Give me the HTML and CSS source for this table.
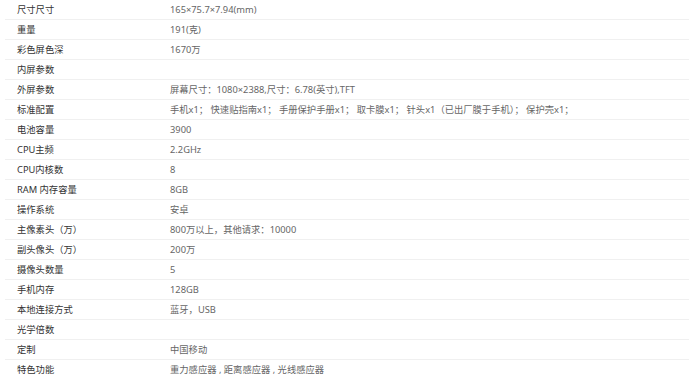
FILE: index.html
```html
<!DOCTYPE html>
<html lang="zh">
<head>
<meta charset="utf-8">
<link rel="stylesheet" href="styles.css">
</head>
<body>
<table class="spec">
<tbody>
<tr><td class="k">尺寸尺寸</td><td class="v">165×75.7×7.94(mm)</td></tr>
<tr><td class="k">重量</td><td class="v">191(克)</td></tr>
<tr><td class="k">彩色屏色深</td><td class="v">1670万</td></tr>
<tr><td class="k">内屏参数</td><td class="v"></td></tr>
<tr><td class="k">外屏参数</td><td class="v">屏幕尺寸：1080×2388,尺寸：6.78(英寸),TFT</td></tr>
<tr><td class="k">标准配置</td><td class="v">手机x1； 快速贴指南x1； 手册保护手册x1； 取卡膜x1； 针头x1（已出厂膜于手机）； 保护壳x1；</td></tr>
<tr><td class="k">电池容量</td><td class="v">3900</td></tr>
<tr><td class="k">CPU主频</td><td class="v">2.2GHz</td></tr>
<tr><td class="k">CPU内核数</td><td class="v">8</td></tr>
<tr><td class="k">RAM 内存容量</td><td class="v">8GB</td></tr>
<tr><td class="k">操作系统</td><td class="v">安卓</td></tr>
<tr><td class="k">主像素头（万）</td><td class="v">800万以上，其他请求：10000</td></tr>
<tr><td class="k">副头像头（万）</td><td class="v">200万</td></tr>
<tr><td class="k">摄像头数量</td><td class="v">5</td></tr>
<tr><td class="k">手机内存</td><td class="v">128GB</td></tr>
<tr><td class="k">本地连接方式</td><td class="v">蓝牙，USB</td></tr>
<tr><td class="k">光学倍数</td><td class="v"></td></tr>
<tr><td class="k">定制</td><td class="v">中国移动</td></tr>
<tr><td class="k">特色功能</td><td class="v">重力感应器 , 距离感应器 , 光线感应器</td></tr>
</tbody>
</table>
</body>
</html>
```
FILE: styles.css
```css
html, body {
  margin: 0;
  padding: 0;
  background: #fff;
}
body {
  font-family: "Noto Sans", "Noto Sans CJK SC", sans-serif;
  font-size: 9.3px;
}
.spec {
  margin-left: 5px;
  width: 684px;
  border-collapse: collapse;
}
.spec td {
  height: 19px;
  padding: 0;
  line-height: 19px;
  border-bottom: 1px solid #f0f0f0;
  white-space: nowrap;
  vertical-align: middle;
}
.spec tr:last-child td {
  border-bottom: none;
}
.k {
  width: 153px;
  padding-left: 12px !important;
  color: #333;
}
.v {
  color: #666;
}
```
